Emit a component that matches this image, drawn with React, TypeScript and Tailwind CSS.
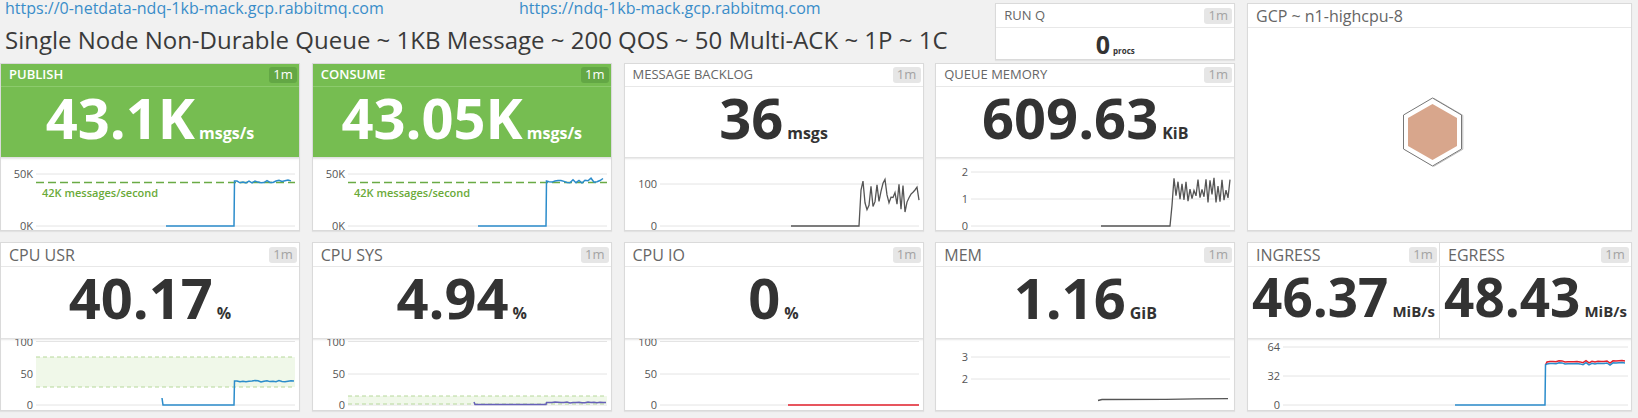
import React from "react";

const FONT = "'Open Sans', 'Noto Sans', sans-serif";

function rng(seed: number) {
  let s = seed;
  return () => {
    s = (s * 9301 + 49297) % 233280;
    return s / 233280;
  };
}

type Pt = [number, number];
function pathOf(pts: Pt[]) {
  return pts.map((p, i) => (i ? "L" : "M") + p[0].toFixed(1) + " " + p[1].toFixed(1)).join(" ");
}

function noisy(seed: number, x0: number, x1: number, step: number, f: (r: () => number, x: number) => number): Pt[] {
  const r = rng(seed);
  const pts: Pt[] = [];
  for (let x = x0; x <= x1; x += step) pts.push([x, f(r, x)]);
  return pts;
}

type Label = { y: number; text: string };

function Chart({
  w,
  h,
  labels,
  labelX = 32,
  gx1 = 35,
  gx2,
  children,
}: {
  w: number;
  h: number;
  labels: Label[];
  labelX?: number;
  gx1?: number;
  gx2?: number;
  children?: React.ReactNode;
}) {
  const x2 = gx2 ?? w - 4;
  return (
    <svg width={w} height={h} className="block">
      {labels.map((l) => (
        <g key={l.text}>
          <line x1={gx1} x2={x2} y1={l.y} y2={l.y} stroke="#e4e4e4" strokeWidth={1} />
          <text
            x={labelX}
            y={l.y + 4}
            textAnchor="end"
            fontSize={11}
            fill="#555"
            style={{ fontFamily: FONT }}
          >
            {l.text}
          </text>
        </g>
      ))}
      {children}
    </svg>
  );
}

function Badge({ green }: { green?: boolean }) {
  return (
    <span
      className={
        green
          ? "flex h-[16px] w-[28px] items-center justify-center rounded-[3px] bg-[#63a745] text-[13px] leading-none text-white"
          : "flex h-[16px] w-[28px] items-center justify-center rounded-[3px] bg-[#e6e6e6] text-[13px] leading-none text-[#a3a3a3]"
      }
    >
      1m
    </span>
  );
}

function Value({ num, unit, size = "big", light }: { num: string; unit: string; size?: "big" | "mid"; light?: boolean }) {
  return (
    <div className={size === "big" ? "flex items-baseline justify-center pt-[2px]" : "flex items-baseline justify-center pt-[3px]"}>
      <span
        className={
          (size === "big" ? "text-[56px] " : "text-[53px] ") +
          "font-bold leading-none " +
          (light ? "text-white" : "text-[#333]")
        }
      >
        {num}
      </span>
      <span
        className={
          (size === "big" ? "text-[16px] " : "text-[15px] ") +
          "ml-[4px] font-bold leading-none " +
          (light ? "text-white" : "text-[#333]")
        }
      >
        {unit}
      </span>
    </div>
  );
}

function Panel({
  title,
  num,
  unit,
  green,
  row,
  chart,
}: {
  title: string;
  num: string;
  unit: string;
  green?: boolean;
  row: 2 | 3;
  chart: React.ReactNode;
}) {
  const r2 = row === 2;
  return (
    <div
      className={
        (r2 ? "mt-[3px] h-[168px] " : "mt-[11px] h-[169px] ") +
        "flex flex-col overflow-hidden border border-[#dadada] bg-white shadow-[0_1px_1px_rgba(0,0,0,0.06)]"
      }
    >
      <div
        className={
          (r2 ? "h-[23px] " : "h-[24px] ") +
          "flex items-center justify-between border-b pl-[8px] pr-[2px] " +
          (green ? "border-[#8ccb6c] bg-[#76bd51]" : "border-[#e8e8e8] bg-white")
        }
      >
        <span
          className={
            r2
              ? green
                ? "text-[13px] font-semibold text-white"
                : "text-[13px] text-[#666]"
              : "text-[16px] text-[#666]"
          }
        >
          {title}
        </span>
        <Badge green={green} />
      </div>
      <div className={(r2 ? "h-[71px] " : "h-[72px] ") + (green ? "bg-[#76bd51]" : "bg-white")}>
        <Value num={num} unit={unit} light={green} />
      </div>
      <div className="flex-1 border-t border-[#e2e2e2] bg-white shadow-[inset_0_2px_2px_-1px_rgba(0,0,0,0.10)]">{chart}</div>
    </div>
  );
}

const W = 298;

function MsgChart({ seed }: { seed: number }) {
  const pts: Pt[] = [
    [165, 68],
    [233, 68],
    [233.5, 23],
    ...noisy(seed, 236, 292, 3, (r) => 22 + r() * 3 - (r() > 0.85 ? 2 : 0)),
  ];
  return (
    <Chart
      w={W}
      h={72}
      labels={[
        { y: 16, text: "50K" },
        { y: 68, text: "0K" },
      ]}
    >
      <line x1={35} x2={294} y1={24.5} y2={24.5} stroke="#6aaa45" strokeWidth={1.5} strokeDasharray="8 4" />
      <text x={41} y={39} fontSize={11} fontWeight={600} fill="#6aaa38" style={{ fontFamily: FONT }}>
        42K messages/second
      </text>
      <path d={pathOf(pts)} fill="none" stroke="#2b8ccb" strokeWidth={1.5} />
    </Chart>
  );
}

function BacklogChart() {
  const pts: Pt[] = [
    [166, 68],
    [234, 68],
    ...noisy(11, 236, 294, 2, (r) => 68 - (30 + r() * 85) * 0.42),
  ];
  return (
    <Chart
      w={W}
      h={72}
      labels={[
        { y: 26, text: "100" },
        { y: 68, text: "0" },
      ]}
    >
      <path d={pathOf(pts)} fill="none" stroke="#555" strokeWidth={1.3} />
    </Chart>
  );
}

function QMemChart() {
  const pts: Pt[] = [
    [165, 68],
    [234, 68],
    ...noisy(23, 236, 295, 2, (r, x) => 68 - (x % 4 === 0 ? 0.7 + r() * 0.5 : 1.3 + r() * 0.5) * 27),
  ];
  return (
    <Chart
      w={W}
      h={72}
      labels={[
        { y: 14, text: "2" },
        { y: 41, text: "1" },
        { y: 68, text: "0" },
      ]}
    >
      <path d={pathOf(pts)} fill="none" stroke="#555" strokeWidth={1.3} />
    </Chart>
  );
}

const cpuLabels: Label[] = [
  { y: 2.5, text: "100" },
  { y: 35, text: "50" },
  { y: 66, text: "0" },
];

function UsrChart() {
  const pts: Pt[] = [
    [161, 59],
    [162, 66],
    [233, 66],
    [233.5, 42],
    ...noisy(5, 236, 293, 3, (r) => 41.5 + r() * 1.5),
  ];
  return (
    <Chart w={W} h={71} labels={cpuLabels}>
      <rect x={35} y={18} width={259} height={30} fill="#f0f8e9" />
      <line x1={35} x2={294} y1={18} y2={18} stroke="#b6d89a" strokeDasharray="4 3" />
      <line x1={35} x2={294} y1={48} y2={48} stroke="#b6d89a" strokeDasharray="4 3" />
      <path d={pathOf(pts)} fill="none" stroke="#2b8ccb" strokeWidth={1.5} />
    </Chart>
  );
}

function SysChart() {
  const pts: Pt[] = [
    [161, 63],
    [162, 65.5],
    [233, 65.5],
    [233.5, 63.5],
    ...noisy(7, 236, 293, 3, (r) => 63 + r() * 1),
  ];
  return (
    <Chart w={W} h={71} labels={cpuLabels}>
      <rect x={35} y={57} width={259} height={8} fill="#f0f8e9" />
      <line x1={35} x2={294} y1={57} y2={57} stroke="#b6d89a" strokeDasharray="4 3" />
      <line x1={35} x2={294} y1={65} y2={65} stroke="#b6d89a" strokeDasharray="4 3" />
      <path d={pathOf(pts)} fill="none" stroke="#6660b8" strokeWidth={1.5} />
    </Chart>
  );
}

function IoChart() {
  return (
    <Chart w={W} h={71} labels={cpuLabels}>
      <line x1={163} x2={294} y1={66} y2={66} stroke="#e3202c" strokeWidth={1.3} />
    </Chart>
  );
}

function MemChart() {
  const pts: Pt[] = [
    [162, 61.5],
    [166, 60.5],
    [230, 60.3],
    [260, 59.8],
    [292, 59.6],
  ];
  return (
    <Chart
      w={W}
      h={71}
      labels={[
        { y: 18, text: "3" },
        { y: 40, text: "2" },
      ]}
    >
      <path d={pathOf(pts)} fill="none" stroke="#555" strokeWidth={1.3} />
    </Chart>
  );
}

function NetChart() {
  const base: Pt[] = noisy(31, 212, 377, 3, (r) => 25 - r() * 1.5 + (r() > 0.9 ? 2 : 0));
  const blue: Pt[] = [[207, 66], [297, 66], [297.5, 26], ...base.filter((p) => p[0] > 298)];
  const red: Pt[] = [[297.5, 26], ...base.filter((p) => p[0] > 298).map((p) => [p[0], p[1] - 2] as Pt)];
  return (
    <Chart
      w={383}
      h={71}
      labels={[
        { y: 8, text: "64" },
        { y: 37, text: "32" },
        { y: 66, text: "0" },
      ]}
      gx2={380}
    >
      <path d={pathOf(red)} fill="none" stroke="#e3202c" strokeWidth={1.5} />
      <path d={pathOf(blue)} fill="none" stroke="#2b8ccb" strokeWidth={1.5} />
    </Chart>
  );
}

function HalfHead({ title, border }: { title: string; border?: boolean }) {
  return (
    <div
      className={
        "flex flex-1 items-center justify-between pl-[8px] pr-[2px] " + (border ? "border-r border-[#dedede]" : "")
      }
    >
      <span className="text-[16px] text-[#666]">{title}</span>
      <Badge />
    </div>
  );
}

function NetPanel() {
  return (
    <div className="mt-[11px] flex h-[169px] flex-col overflow-hidden border border-[#dadada] bg-white shadow-[0_1px_1px_rgba(0,0,0,0.06)]">
      <div className="flex h-[24px] border-b border-[#e8e8e8]">
        <HalfHead title="INGRESS" border />
        <HalfHead title="EGRESS" />
      </div>
      <div className="flex h-[72px]">
        <div className="flex-1 border-r border-[#dedede]">
          <Value num="46.37" unit="MiB/s" size="mid" />
        </div>
        <div className="flex-1">
          <Value num="48.43" unit="MiB/s" size="mid" />
        </div>
      </div>
      <div className="flex-1 border-t border-[#e2e2e2] shadow-[inset_0_2px_2px_-1px_rgba(0,0,0,0.10)]">
        <NetChart />
      </div>
    </div>
  );
}

function GcpPanel() {
  return (
    <div className="row-span-2 mt-[3px] flex h-[228px] flex-col border border-[#dadada] bg-white shadow-[0_1px_1px_rgba(0,0,0,0.06)]">
      <div className="flex h-[24px] items-center border-b border-[#e8e8e8] pl-[8px]">
        <span className="text-[16px] text-[#666]">GCP ~ n1-highcpu-8</span>
      </div>
      <div className="flex flex-1 items-center justify-center pr-[14px] pt-[6px]">
        <svg width={62} height={70} viewBox="0 0 62 70">
          <polygon points="31,1 60,18 60,52 31,69 2,52 2,18" fill="none" stroke="#bbb" strokeWidth={1} transform="translate(0.8,0.3)" />
          <polygon points="30.5,1 59.5,18 59.5,52 30.5,69 1.5,52 1.5,18" fill="white" stroke="#777" strokeWidth={1} />
          <polygon points="30.5,7 55,21 55,49 30.5,63 6,49 6,21" fill="#d8a68c" />
        </svg>
      </div>
    </div>
  );
}

function RunQ() {
  return (
    <div className="mt-[3px] flex h-[57px] w-[240px] flex-col justify-self-end border border-[#dadada] bg-white shadow-[0_1px_1px_rgba(0,0,0,0.06)]">
      <div className="flex h-[24px] items-center justify-between border-b border-[#e8e8e8] pl-[8px] pr-[2px]">
        <span className="text-[13px] text-[#666]">RUN Q</span>
        <Badge />
      </div>
      <div className="flex items-baseline justify-center pt-[4px]">
        <span className="text-[25px] font-bold leading-none text-[#333]">0</span>
        <span className="ml-[3px] text-[8px] font-bold leading-none text-[#333]">procs</span>
      </div>
    </div>
  );
}

export default function App() {
  return (
    <div
      className="h-[418px] w-[1638px] overflow-hidden bg-[#f1f1f1]"
      style={{ fontFamily: FONT }}
    >
      <div className="grid grid-cols-[300px_300px_300px_300px_385px] grid-rows-[60px_171px_180px] gap-x-[11.75px]">
        <div className="col-span-3 flex flex-col pl-[5px]">
          <div className="flex text-[16px] leading-[17px] text-[#3a8dc9]">
            <span className="w-[514px]">https://0-netdata-ndq-1kb-mack.gcp.rabbitmq.com</span>
            <span>https://ndq-1kb-mack.gcp.rabbitmq.com</span>
          </div>
          <div className="mt-[8px] whitespace-nowrap text-[24px] leading-[29px] text-[#3a3a3a]">
            Single Node Non-Durable Queue ~ 1KB Message ~ 200 QOS ~ 50 Multi-ACK ~ 1P ~ 1C
          </div>
        </div>
        <RunQ />
        <GcpPanel />

        <Panel title="PUBLISH" num="43.1K" unit="msgs/s" green row={2} chart={<MsgChart seed={3} />} />
        <Panel title="CONSUME" num="43.05K" unit="msgs/s" green row={2} chart={<MsgChart seed={9} />} />
        <Panel title="MESSAGE BACKLOG" num="36" unit="msgs" row={2} chart={<BacklogChart />} />
        <Panel title="QUEUE MEMORY" num="609.63" unit="KiB" row={2} chart={<QMemChart />} />

        <Panel title="CPU USR" num="40.17" unit="%" row={3} chart={<UsrChart />} />
        <Panel title="CPU SYS" num="4.94" unit="%" row={3} chart={<SysChart />} />
        <Panel title="CPU IO" num="0" unit="%" row={3} chart={<IoChart />} />
        <Panel title="MEM" num="1.16" unit="GiB" row={3} chart={<MemChart />} />
        <NetPanel />
      </div>
    </div>
  );
}
